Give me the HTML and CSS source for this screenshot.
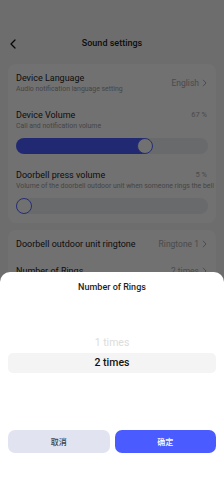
FILE: index.html
```html
<!DOCTYPE html>
<html lang="en">
<head>
    <meta charset="UTF-8">
    <meta name="viewport" content="width=device-width, initial-scale=1.0">
    <title>Sound settings</title>
    <link rel="stylesheet" href="styles.css">
</head>
<body>

    <!-- Header -->
    <header class="topbar">
        <svg class="back" width="6" height="10" viewBox="0 0 6 10"><path d="M5 1 L1 5 L5 9" fill="none" stroke="#111" stroke-width="1.3" stroke-linecap="round" stroke-linejoin="round"/></svg>
        <h1>Sound settings</h1>
    </header>

    <!-- Volume card -->
    <div class="card">
        <div class="row">
            <div class="info">
                <div class="title">Device Language</div>
                <div class="sub">Audio notification language setting</div>
            </div>
            <div class="value">English <svg width="5" height="8" viewBox="0 0 5 8"><path d="M1 0.8 L4 4 L1 7.2" fill="none" stroke="#aaa" stroke-width="1"/></svg></div>
        </div>

        <div class="row slider-row">
            <div class="info">
                <div class="title">Device Volume</div>
                <div class="sub">Call and notification volume</div>
            </div>
            <div class="value pct">67 %</div>
        </div>
        <div class="track">
            <div class="fill" style="width: 67%;"><span class="thumb"></span></div>
        </div>

        <div class="row slider-row">
            <div class="info">
                <div class="title">Doorbell press volume</div>
                <div class="sub">Volume of the doorbell outdoor unit when someone rings the bell</div>
            </div>
            <div class="value pct">5 %</div>
        </div>
        <div class="track">
            <div class="fill low" style="width: 9%;"><span class="thumb"></span></div>
        </div>
    </div>

    <!-- Ringtone card -->
    <div class="card card-list">
        <div class="row line">
            <div class="title">Doorbell outdoor unit ringtone</div>
            <div class="value">Ringtone 1 <svg width="5" height="8" viewBox="0 0 5 8"><path d="M1 0.8 L4 4 L1 7.2" fill="none" stroke="#aaa" stroke-width="1"/></svg></div>
        </div>
        <div class="row line">
            <div class="title">Number of Rings</div>
            <div class="value">2 times <svg width="5" height="8" viewBox="0 0 5 8"><path d="M1 0.8 L4 4 L1 7.2" fill="none" stroke="#aaa" stroke-width="1"/></svg></div>
        </div>
    </div>

    <!-- Dim overlay -->
    <div class="mask"></div>

    <!-- Bottom sheet picker -->
    <div class="sheet">
        <h2>Number of Rings</h2>
        <div class="picker">
            <div class="option faded">1 times</div>
            <div class="option selected">2 times</div>
        </div>
        <div class="actions">
            <button class="btn cancel">取消</button>
            <button class="btn ok">确定</button>
        </div>
    </div>

</body>
</html>
```

FILE: styles.css
```css
/* Reset */
* { margin: 0; padding: 0; box-sizing: border-box; }

body {
    font-family: Roboto, "Noto Sans CJK SC", sans-serif;
    background-color: #f1f2f4;
    width: 224px;
    height: 500px;
    overflow: hidden;
    position: relative;
    color: #222;
}

/* Header */
.topbar {
    height: 56px;
    padding-top: 30px;
    position: relative;
    display: flex;
    align-items: center;
    justify-content: center;
}

.topbar h1 {
    font-size: 9px;
    font-weight: 500;
    line-height: 26px;
}

.back {
    position: absolute;
    left: 10px;
    top: 39px;
}

/* Cards */
.card {
    background: #fafafa;
    margin: 8px 8px 0;
    border-radius: 8px;
    padding: 8px 8px 9px;
}

.card-list {
    margin-top: 7px;
    padding: 0 8px;
}

.row {
    display: flex;
    justify-content: space-between;
    align-items: center;
    gap: 4px;
}

.info {
    flex: 1;
    min-width: 0;
}

.slider-row {
    margin-top: 15px;
    align-items: flex-start;
}

.title {
    font-size: 9px;
    line-height: 12px;
    color: #1e1e1e;
}

.sub {
    font-size: 6.9px;
    line-height: 10px;
    color: #9a9a9a;
    white-space: nowrap;
}

.value {
    font-size: 8.5px;
    color: #a8a8a8;
    display: flex;
    align-items: center;
    gap: 3px;
    white-space: nowrap;
    flex-shrink: 0;
}

.value svg { margin-right: 1px; }

.pct {
    line-height: 12px;
    font-size: 7.5px;
    margin-right: 1px;
}

.line {
    height: 27px;
}

.line:first-child {
    margin-top: 1px;
}

/* Slider */
.track {
    height: 16px;
    border-radius: 8px;
    background: #e9eaee;
    margin-top: 7px;
}

.fill {
    height: 16px;
    border-radius: 8px 0 0 8px;
    background: #4a5cff;
    position: relative;
}

.fill.low { background: transparent; }

.thumb {
    position: absolute;
    right: -8px;
    top: 0;
    width: 16px;
    height: 16px;
    border-radius: 50%;
    background: #fafafa;
    border: 1.5px solid #5465ff;
}

.fill.low .thumb {
    left: 0;
    right: auto;
}

/* Overlay */
.mask {
    position: absolute;
    inset: 0;
    background: rgba(0, 0, 0, 0.55);
}

/* Bottom sheet */
.sheet {
    position: absolute;
    left: 0;
    right: 0;
    top: 272px;
    bottom: 0;
    background: #fff;
    border-radius: 10px 10px 0 0;
    padding: 9px 8px 0;
}

.sheet h2 {
    font-size: 9px;
    font-weight: 500;
    text-align: center;
    line-height: 12px;
    color: #1e1e1e;
}

.picker {
    margin-top: 40px;
}

.option {
    text-align: center;
    font-size: 10.5px;
    height: 20px;
    line-height: 20px;
}

.faded {
    color: #dcdcdc;
}

.selected {
    background: #f4f4f4;
    border-radius: 5px;
    color: #111;
    font-weight: 500;
}

.actions {
    display: flex;
    gap: 5px;
    margin-top: 57px;
}

.btn {
    flex: 1;
    height: 23px;
    border: none;
    border-radius: 7px;
    font-family: "Noto Sans CJK SC", sans-serif;
    font-size: 8px;
    font-weight: 500;
}

.cancel {
    background: #e1e3f0;
    color: #444;
}

.ok {
    background: #4a5cff;
    color: #fff;
}
```
